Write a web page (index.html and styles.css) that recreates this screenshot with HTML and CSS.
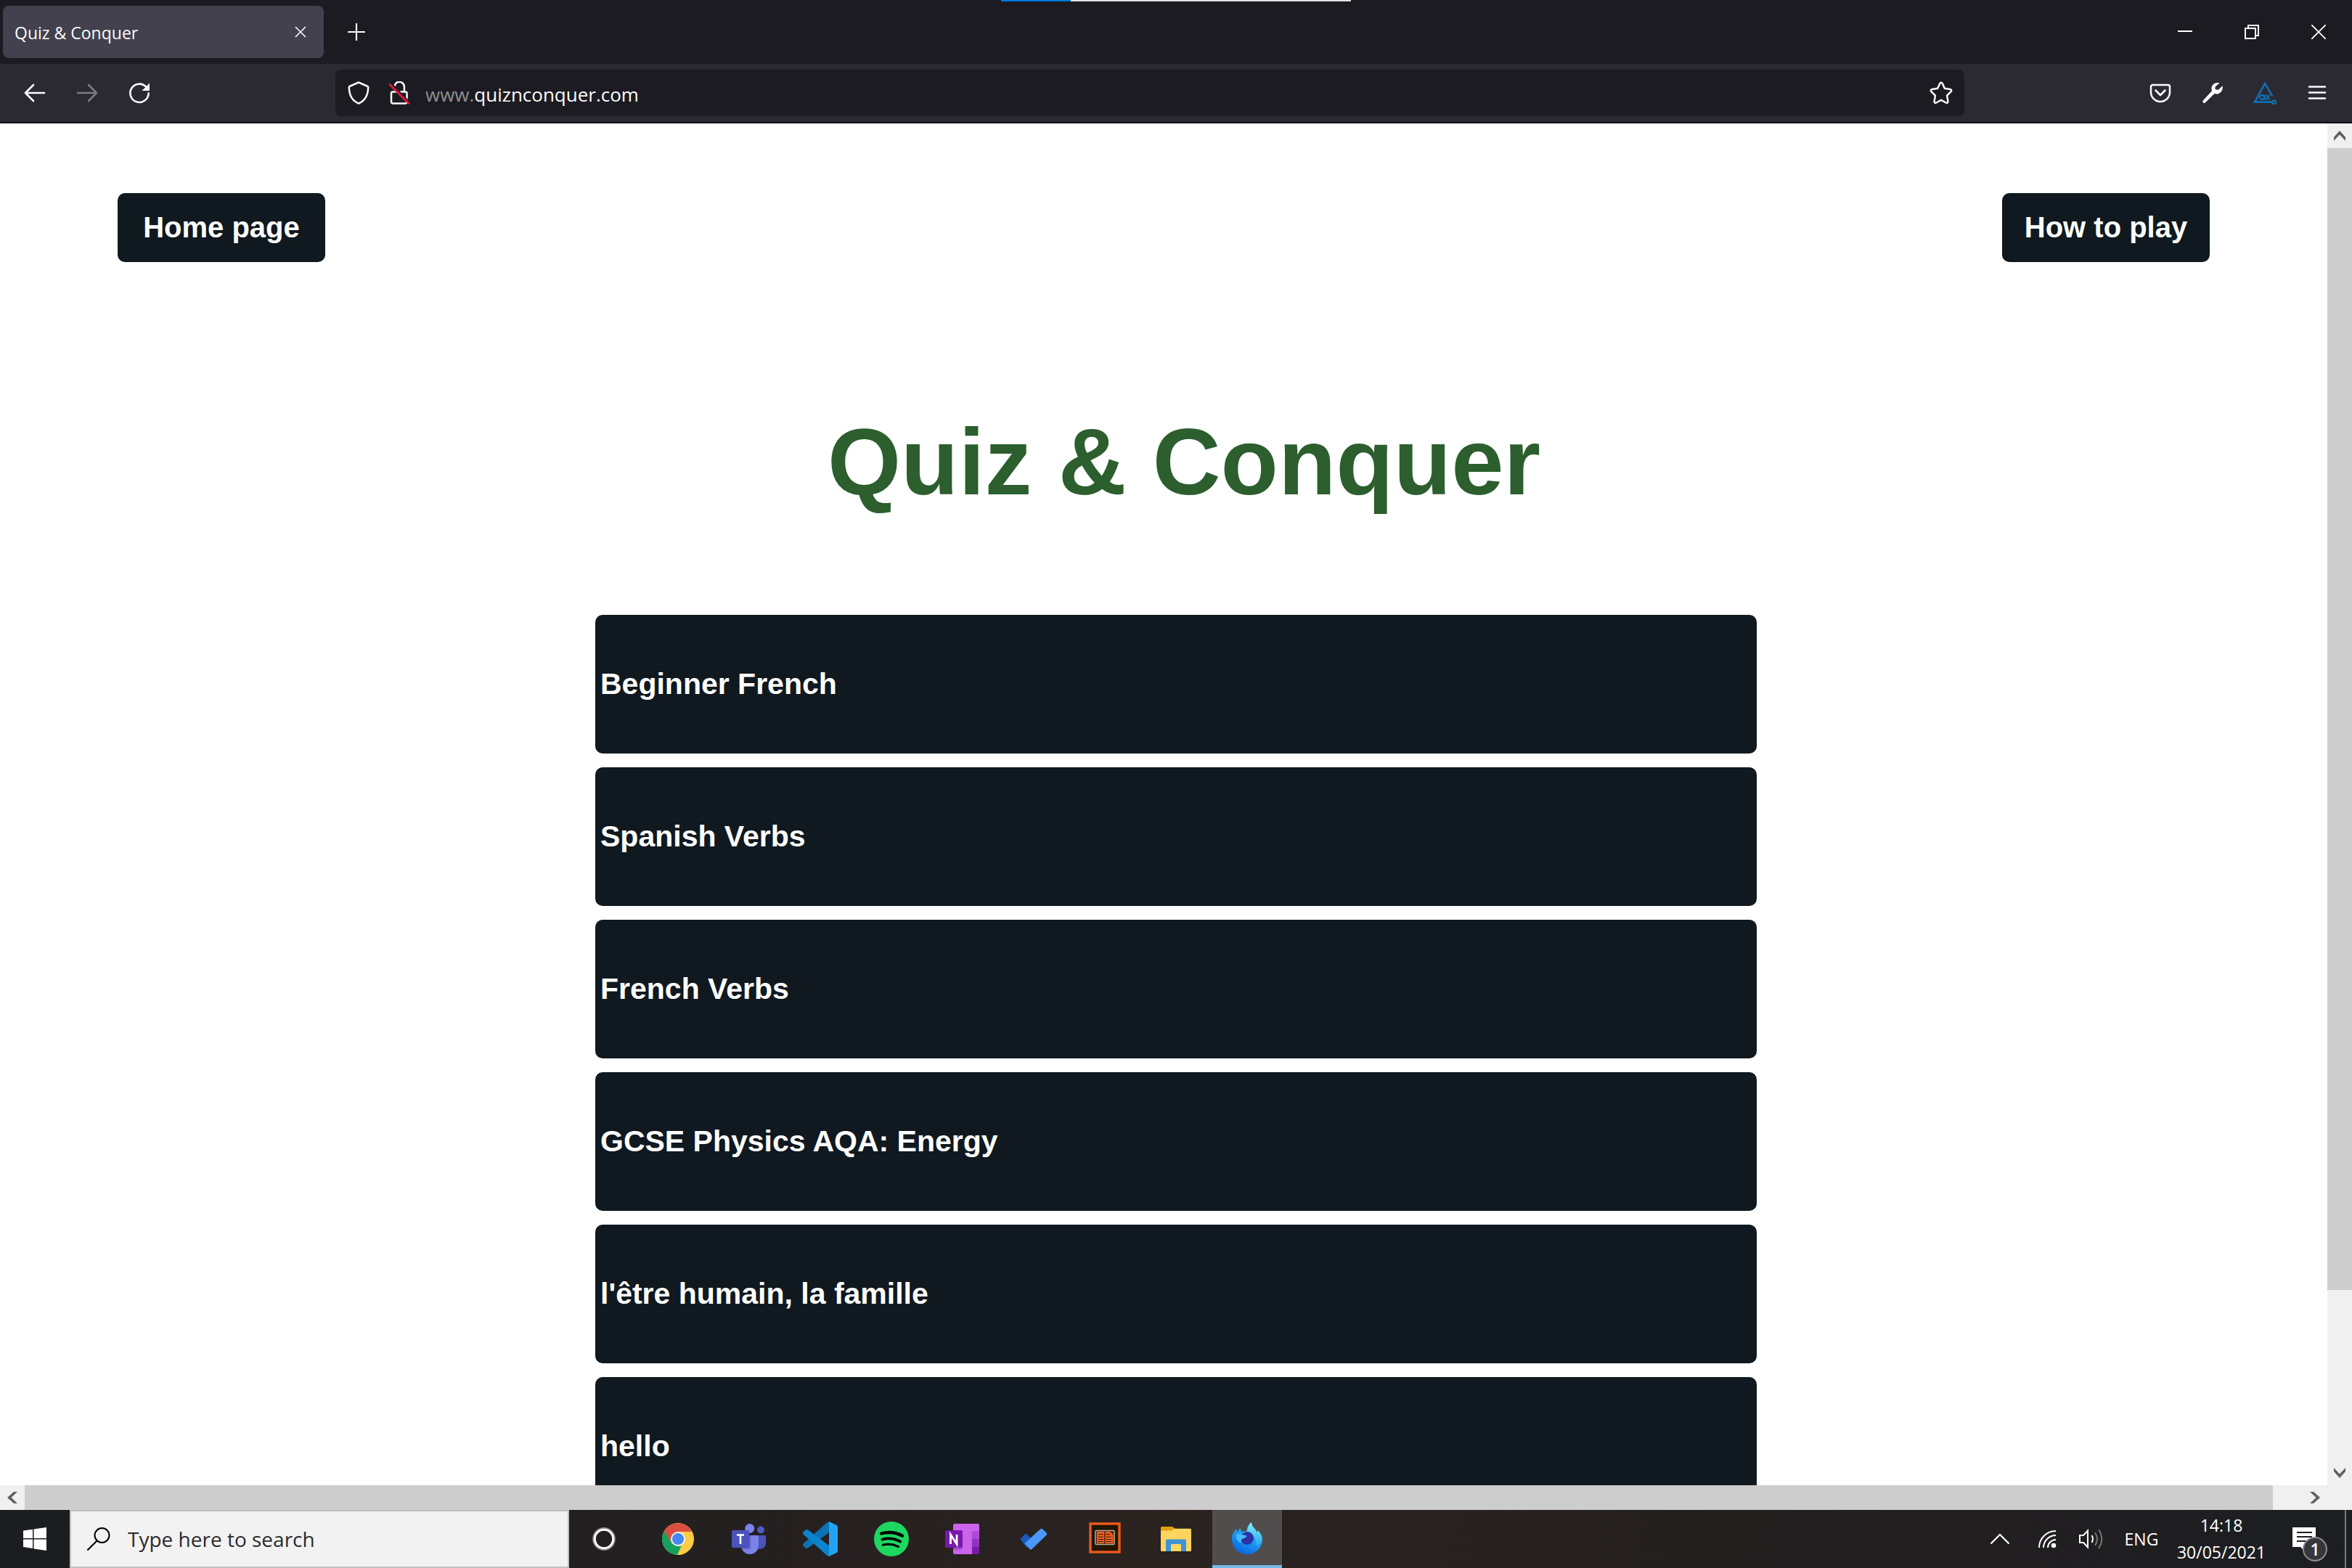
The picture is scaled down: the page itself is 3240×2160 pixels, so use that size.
FILE: index.html
```html
<!DOCTYPE html>
<html lang="en">
<head>
<meta charset="utf-8">
<title>Quiz &amp; Conquer</title>
<link rel="stylesheet" href="styles.css">
</head>
<body>
<header class="browser">
  <div class="progress" aria-hidden="true"><span class="progress-done"></span></div>
  <div class="tabbar">
    <div class="tab">
      <span class="tab-title">Quiz &amp; Conquer</span>
      <button class="tab-close" aria-label="Close tab"><svg width="16" height="16" viewBox="0 0 16 16"><path d="M1 1l14 14M15 1L1 15" fill="none" stroke="#fbfbfe" stroke-width="1.6"/></svg></button>
    </div>
    <button class="new-tab" aria-label="New tab"><svg width="24" height="24" viewBox="0 0 24 24"><path d="M12 1v22M1 12h22" fill="none" stroke="#fff" stroke-width="2.2" stroke-linecap="round"/></svg></button>
    <div class="window-controls">
      <button aria-label="Minimise"><svg width="20" height="20" viewBox="0 0 20 20"><path d="M0 9h20" stroke="#fff" stroke-width="2"/></svg></button>
      <button aria-label="Restore"><svg width="20" height="20" viewBox="0 0 20 20"><path d="M1 5h14v14H1zM5 5V1h14v14h-4" fill="none" stroke="#fff" stroke-width="2"/></svg></button>
      <button aria-label="Close"><svg width="20" height="20" viewBox="0 0 20 20"><path d="M0 0l20 20M20 0L0 20" stroke="#fff" stroke-width="1.8"/></svg></button>
    </div>
  </div>
  <div class="toolbar">
    <button class="tool" aria-label="Back"><svg width="32" height="32" viewBox="0 0 32 32"><path d="M29 16H4M14 5L3 16l11 11" fill="none" stroke="#fbfbfe" stroke-width="2.6" stroke-linecap="round" stroke-linejoin="round"/></svg></button>
    <button class="tool" aria-label="Forward" disabled><svg width="32" height="32" viewBox="0 0 32 32"><path d="M3 16h25M18 5l11 11-11 11" fill="none" stroke="#7b7a82" stroke-width="2.6" stroke-linecap="round" stroke-linejoin="round"/></svg></button>
    <button class="tool" aria-label="Reload"><svg width="32" height="32" viewBox="0 0 32 32"><path d="M25.500 8A12.600 12.600 0 1 0 28.600 16.500" fill="none" stroke="#fbfbfe" stroke-width="2.600" stroke-linecap="round"/><path d="M30 2.500V12a1 1 0 0 1-1 1h-9.500z" fill="#fbfbfe"/></svg></button>
    <div class="urlbar">
      <button class="url-icon" aria-label="Tracking protection"><svg width="32" height="32" viewBox="0 0 32 32"><path d="M16 1.500L28.500 7c.5.2.7.6.7 1.200C29 19 25.500 26.500 16 30.500 6.500 26.500 3 19 2.800 8.200c0-.6.200-1 .700-1.200z" fill="none" stroke="#fbfbfe" stroke-width="2.500" stroke-linejoin="round"/></svg></button>
      <button class="url-icon" aria-label="Connection not secure"><svg width="32" height="32" viewBox="0 0 32 32"><path d="M9.500 7a6.700 6.700 0 0 1 13.400 1v6M7 14.500h17.500a2 2 0 0 1 2 2V28a2.500 2.500 0 0 1-2.500 2.500H7.500A2.500 2.500 0 0 1 5 28V16.500a2 2 0 0 1 2-2z" fill="none" stroke="#fbfbfe" stroke-width="2.500"/><path d="M5.500 3.500l26 27" stroke="#1c1b22" stroke-width="2.500"/><path d="M3 4.500l26 26" stroke="#e5173f" stroke-width="2.700" stroke-linecap="round"/></svg></button>
      <label class="url"><span class="url-sub">www.</span><input class="url-input" type="text" value="quiznconquer.com" aria-label="Address"></label>
      <button class="url-icon" aria-label="Bookmark"><svg width="32" height="32" viewBox="0 0 32 32"><path d="M14.400 2.800c.700-1.500 2.500-1.500 3.200 0l3.300 7 7.600 1.100c1.700.200 2.300 2 1.100 3.200l-5.500 5.500 1.300 7.800c.3 1.700-1.300 2.900-2.700 2.100L16 25.800l-6.700 3.700c-1.400.800-3-.4-2.700-2.100l1.300-7.800-5.500-5.500c-1.200-1.200-.6-3 1.100-3.200l7.600-1.100z" fill="none" stroke="#fbfbfe" stroke-width="2.500" stroke-linejoin="round"/></svg></button>
    </div>
    <button class="tool" aria-label="Pocket"><svg width="32" height="32" viewBox="0 0 32 32"><path d="M5.500 5h21A2.500 2.500 0 0 1 29 7.500V15a13 13 0 0 1-26 0V7.500A2.500 2.500 0 0 1 5.500 5z" fill="none" stroke="#fbfbfe" stroke-width="2.500"/><path d="M9.500 12.500l6.500 6.500 6.500-6.500" fill="none" stroke="#fbfbfe" stroke-width="2.600" stroke-linecap="round" stroke-linejoin="round"/></svg></button>
    <button class="tool" aria-label="Developer tools"><svg width="32" height="32" viewBox="0 0 32 32"><path d="M25.500 2.500C21 1 15 3.500 14.500 9c-.1 1.700.1 2.900.5 4.200L2.800 26.500c-1.600 1.900.9 4.600 2.900 2.900L18.500 17c1.200.4 2.400.6 4 .4 5.500-.6 8.300-6.400 7-11.200l-5.700 5.600-4.200-.9 0-3.300z" fill="#fbfbfe"/></svg></button>
    <button class="tool" aria-label="Accessibility checker"><svg width="32" height="32" viewBox="0 0 32 32"><path d="M26.500 20.500L16 3 2 28.500h24" fill="none" stroke="#0f76bd" stroke-width="2.400"/><circle cx="28.700" cy="28.700" r="2.500" fill="none" stroke="#0f76bd" stroke-width="2"/><circle cx="12" cy="22" r="3" fill="none" stroke="#0f76bd" stroke-width="1.800"/><path d="M15.500 18.500v7M17.500 18.500l5 7M22.500 18.500l-5 7" stroke="#0f76bd" stroke-width="1.800"/></svg></button>
    <button class="tool" aria-label="Menu"><svg width="32" height="32" viewBox="0 0 32 32"><path d="M5 7.500h22M5 15.500h22M5 23.500h22" stroke="#fbfbfe" stroke-width="2.600" stroke-linecap="round"/></svg></button>
  </div>
</header>

<div class="viewport">
  <main class="page">
    <nav class="page-nav">
      <a class="nav-link" href="#home">Home page</a>
      <a class="nav-link" href="#how">How to play</a>
    </nav>
    <h1 class="title">Quiz &amp; Conquer</h1>
    <ul class="quizzes">
      <li><a class="quiz" href="#q1">Beginner French</a></li>
      <li><a class="quiz" href="#q2">Spanish Verbs</a></li>
      <li><a class="quiz" href="#q3">French Verbs</a></li>
      <li><a class="quiz" href="#q4">GCSE Physics AQA: Energy</a></li>
      <li><a class="quiz" href="#q5">l'être humain, la famille</a></li>
      <li><a class="quiz" href="#q6">hello</a></li>
    </ul>
  </main>
  <div class="scroll scroll-v">
    <button class="scroll-btn" aria-label="Scroll up"><svg width="16" height="14" viewBox="0 0 16 14"><path d="M0 9l8-9 8 9v5L8 5.500 0 14z" fill="#606060"/></svg></button>
    <span class="thumb-v"></span><span class="rest-v"></span>
    <button class="scroll-btn" aria-label="Scroll down"><svg width="16" height="14" viewBox="0 0 16 14"><path d="M0 0l8 8.500L16 0v5l-8 9-8-9z" fill="#606060"/></svg></button>
  </div>
  <div class="scroll scroll-h">
    <button class="scroll-btn" aria-label="Scroll left"><svg width="14" height="16" viewBox="0 0 14 16"><path d="M9 0L0 8l9 8h5L5.500 8 14 0z" fill="#606060"/></svg></button>
    <span class="thumb-h"></span><span class="rest-h"></span>
    <button class="scroll-btn" aria-label="Scroll right"><svg width="14" height="16" viewBox="0 0 14 16"><path d="M0 0l8.500 8L0 16h5l9-8-9-8z" fill="#606060"/></svg></button>
  </div>
  <div class="scroll"></div>
</div>

<footer class="taskbar">
  <button class="start" aria-label="Start"><svg width="32" height="32" viewBox="0 0 32 32"><path d="M0 4.500L13 2.700V15H0zM14.500 2.500L32 0v15H14.500zM0 16.500h13v12.400L0 27zM14.500 16.500H32V32l-17.500-2.500z" fill="#fff"/></svg></button>
  <label class="search">
    <svg width="32" height="32" viewBox="0 0 32 32"><circle cx="20.500" cy="11" r="10" fill="none" stroke="#000" stroke-width="2"/><path d="M13.500 18.500L1 31" stroke="#000" stroke-width="2.200" stroke-linecap="round"/></svg>
    <input class="search-input" type="text" placeholder="Type here to search" aria-label="Type here to search">
  </label>
  <button class="app cortana" aria-label="Cortana"><svg width="32" height="32" viewBox="0 0 32 32"><circle cx="16" cy="16" r="14.700" fill="none" stroke="#8a8888" stroke-width="2.500"/><circle cx="16" cy="16" r="12.700" fill="none" stroke="#fff" stroke-width="3"/></svg></button>
  <div class="apps">
    <button class="app" aria-label="Chrome"><svg width="48" height="48" viewBox="0 0 48 48"><circle cx="24" cy="24" r="22" fill="#fc4"/><path d="M4.900 13A22 22 0 0 1 43.100 14H24L14.800 29z" fill="#db4f43"/><path d="M4.900 13L15.300 29.500 24 34h4.500L23 46A22 22 0 0 1 4.900 13z" fill="#17a05d"/><path d="M23 46l9.500-17L30 14h13.100A22 22 0 0 1 23 46z" fill="#fc4"/><circle cx="24" cy="24" r="10" fill="#f4f4f4"/><circle cx="24" cy="24" r="8" fill="#4587f3"/></svg></button>
    <button class="app" aria-label="Teams"><svg width="48" height="48" viewBox="0 0 48 48"><circle cx="40" cy="11.500" r="5" fill="#5059c9"/><path d="M34 19h11.500a1.500 1.500 0 0 1 1.500 1.500V30a8 8 0 0 1-13 6z" fill="#4b53bc"/><circle cx="24.800" cy="9.500" r="6.500" fill="#7b83eb"/><path d="M14 19h21.500a1.500 1.500 0 0 1 1.500 1.500V33a12 12 0 0 1-24 0z" fill="#7b83eb"/><path d="M14 19h12v17a2 2 0 0 1-2 2H14z" fill="#4c51a8" opacity=".6"/><rect x="0" y="12" width="24" height="24" rx="2" fill="#4b53bc"/><path d="M7 18.500h10M12 18.500V31" stroke="#fff" stroke-width="2.600"/></svg></button>
    <button class="app" aria-label="Visual Studio Code"><svg width="48" height="48" viewBox="0 0 48 48"><path d="M36 0v15L7 36.500c-1 .7-2 .7-3 0L.8 33.800c-1.100-1-1.100-2.500 0-3.500L33.500 1z" fill="#0b72b5"/><path d="M36 48V33L7 11.500c-1-.7-2-.7-3 0L.8 14.200c-1.100 1-1.100 2.500 0 3.500L33.500 47z" fill="#0b84d0"/><path d="M36 0l10.500 5c1 .5 1.500 1.200 1.500 2.300v33.400c0 1.100-.5 1.800-1.500 2.300L36 48z" fill="#22a2f2"/></svg></button>
    <button class="app" aria-label="Spotify"><svg width="48" height="48" viewBox="0 0 48 48"><circle cx="24" cy="24" r="24" fill="#1ed760"/><path d="M10 16.500c10-2.800 20-1.800 29 3.200" fill="none" stroke="#000" stroke-width="4.400" stroke-linecap="round"/><path d="M11.300 24.700c8.500-2.300 17-1.300 25 2.900" fill="none" stroke="#000" stroke-width="3.700" stroke-linecap="round"/><path d="M12.300 32.300c7.500-1.800 14.500-1 21.300 2.300" fill="none" stroke="#000" stroke-width="3" stroke-linecap="round"/></svg></button>
    <button class="app" aria-label="OneNote"><svg width="48" height="48" viewBox="0 0 48 48"><path d="M13 3h32a2 2 0 0 1 2 2v8H37v32H13a2 2 0 0 1-2-2V5a2 2 0 0 1 2-2z" fill="#ca64ea"/><path d="M37 13h10v11H37z" fill="#ae4bd5"/><path d="M37 24h10v11H37z" fill="#9332bf"/><path d="M37 35h10v8a2 2 0 0 1-2 2h-8z" fill="#7719aa"/><path d="M11 14h13v22a3 3 0 0 1-3 3H11z" fill="#8c3aad" opacity=".5"/><rect x="0" y="12" width="24" height="24" rx="2" fill="#7719aa"/><path d="M7.500 31V18L16 31V18" fill="none" stroke="#fff" stroke-width="2.800"/></svg></button>
    <button class="app" aria-label="To Do"><svg width="48" height="48" viewBox="0 0 48 48"><path d="M6.500 23l5-5.500c1-1 2-1 3 0l9 8.500-9 10L6.500 26c-1-1-1-2 0-3z" fill="#195abd"/><path d="M11.500 30L33 10.500c1-1 2.200-1 3.200 0l5.300 5c1 1 1 2.200 0 3.200L21.500 38c-1 1-2 1-3 0z" fill="#4a98fa"/></svg></button>
    <button class="app" aria-label="Digital Editions"><svg width="48" height="48" viewBox="0 0 48 48"><rect x="4" y="3" width="40" height="39" fill="#231600" stroke="#ee5a1c" stroke-width="3.400"/><rect x="11" y="12.500" width="26" height="19" rx="1" fill="#33230f" stroke="#b9ae9f" stroke-width="1.500"/><path d="M13 14h10.300v16H13zM24.700 14h6.800l4 4v12H24.700z" fill="#ee5a1c"/><path d="M15 17.500h7M15 21h7M15 24.500h7M15 27.500h7M26 17.500h5M26 21h7M26 24.500h7M26 27.500h7" stroke="#33230f" stroke-width="1.200"/></svg></button>
    <button class="app" aria-label="File Explorer"><svg width="48" height="48" viewBox="0 0 48 48"><path d="M3 8.500A1.500 1.500 0 0 1 4.500 7H19l4 3v4H3z" fill="#e0a10b"/><path d="M3 12.500h15l4-2.700h21.500A1.500 1.500 0 0 1 45 11.300v28.200a1.500 1.500 0 0 1-1.500 1.500h-39A1.500 1.500 0 0 1 3 39.500z" fill="#ffd55e"/><path d="M10 41V26.500a2 2 0 0 1 2-2h24a2 2 0 0 1 2 2V41h-7v-8.500a1.500 1.500 0 0 0-1.500-1.500h-11a1.500 1.500 0 0 0-1.500 1.500V41z" fill="#3d94d8"/></svg></button>
    <button class="app app-active" aria-label="Firefox"><svg width="48" height="48" viewBox="0 0 48 48"><defs><linearGradient id="flame" x1=".8" y1="0" x2=".3" y2="1"><stop offset="0" stop-color="#6ff0ff"/><stop offset=".45" stop-color="#1ea4f8"/><stop offset="1" stop-color="#0a62dd"/></linearGradient><linearGradient id="tail" x1="0" y1="0" x2="0" y2="1"><stop offset="0" stop-color="#80ebff"/><stop offset="1" stop-color="#2aa5ee"/></linearGradient></defs><path d="M8 10c1 2 2 3 3.500 4.500C12 12 13 10.500 15 9c0 2 .5 3.500 1.500 5 2-.5 4-.6 6.500-.5 1-5.500 3-9.500 7-12.500.5 4 2 6.500 5 9.500l2 4 2-2c3.500 3.500 6 7 6 12A21 21 0 1 1 3 24c0-4 .5-6 2-9 .7.500 1 .7 1.500 1-.2-2.200.3-4 1.500-6z" fill="url(#flame)"/><path d="M24 13c1-5.500 2.500-9.500 5.500-12 .5 4 2.500 6.500 5.500 9.500l2 4 2-2c3 3.500 5 7.500 4.500 13.500-1.500 4.500-4 6.500-7.500 8C38 26 34 17 24 13z" fill="url(#tail)"/><circle cx="24" cy="23" r="9" fill="#2e32a6"/><path d="M9 18c3-1.500 6-1.500 9 .2 2.500.3 4 .6 5.500 1.800-1 2.500-3.500 3-6.500 4-2 2-.5 4-1 5.500C10 28 8.500 22.500 9 18z" fill="#45b8f5"/></svg></button>
  </div>
  <div class="tray">
    <button class="tray-btn tray-more" aria-label="Show hidden icons"><svg width="28" height="16" viewBox="0 0 28 16"><path d="M1.500 14.500L14 2l12.500 12.500" fill="none" stroke="#fff" stroke-width="2.200"/></svg></button>
    <button class="tray-btn" aria-label="Network"><svg width="26" height="26" viewBox="0 0 26 26"><path d="M2 25A23 23 0 0 1 25 2M8 25A17 17 0 0 1 25 8M14 25A11 11 0 0 1 25 14" fill="none" stroke="#fff" stroke-width="2"/><circle cx="22" cy="22" r="3.300" fill="#fff"/></svg></button>
    <button class="tray-btn" aria-label="Volume"><svg width="34" height="30" viewBox="0 0 34 30"><path d="M2 10h5l6-6.500v23L7 20H2z" fill="none" stroke="#fff" stroke-width="2"/><path d="M18.500 10q3 5 0 10" fill="none" stroke="#fff" stroke-width="2"/><path d="M23 6q6 9 0 18M28 2q8.500 13 0 26" fill="none" stroke="#777" stroke-width="2"/></svg></button>
    <button class="tray-btn tray-lang">ENG</button>
    <button class="tray-btn clock"><span>14:18</span><span>30/05/2021</span></button>
    <button class="tray-btn tray-note" aria-label="Notifications"><svg width="48" height="48" viewBox="0 0 48 48"><path d="M7 8h32v27H23v5l-5-5H7z" fill="#fff"/><path d="M13 15h21M13 21h21M13 27h21" stroke="#1e1f22" stroke-width="2"/></svg><span class="badge">1</span></button>
    <button class="show-desktop" aria-label="Show desktop"></button>
  </div>
</footer>
</body>
</html>
```
FILE: styles.css
```css
* { box-sizing: border-box; }

body {
  margin: 0;
  height: 100vh;
  display: flex;
  flex-direction: column;
  overflow: hidden;
  background: #fff;
  font-family: "Open Sans", "Noto Sans", sans-serif;
}

button {
  margin: 0;
  padding: 0;
  border: 0;
  background: none;
  color: inherit;
  font: inherit;
  display: flex;
  align-items: center;
  justify-content: center;
}

input {
  padding: 0;
  border: 0;
  outline: 0;
  background: none;
  font: inherit;
  color: inherit;
}

svg { display: block; flex: none; }

/* Browser chrome */
.browser { position: relative; flex: none; color: #fbfbfe; border-bottom: 2px solid #0c0c0d; }

.progress {
  position: absolute;
  top: 0;
  left: 50%;
  width: 482px;
  height: 2px;
  margin-left: -241px;
  background: #e3e3e3;
}
.progress-done { display: block; width: 20%; height: 2px; background: #0078d7; }

.tabbar { height: 88px; display: flex; align-items: center; padding-left: 4px; background: #1c1b22; }
.tab {
  width: 442px;
  height: 72px;
  display: flex;
  align-items: center;
  justify-content: space-between;
  padding: 0 24px 0 16px;
  border-radius: 8px;
  background: #42414d;
  font-size: 23px;
}
.tab-title { padding-top: 2px; }
.tab-close { width: 16px; height: 32px; }
.new-tab { width: 90px; height: 72px; }
.window-controls { display: flex; margin-left: auto; }
.window-controls button { width: 92px; height: 88px; }

.toolbar { height: 80px; display: flex; align-items: center; padding: 0 12px; background: #2b2a33; }
.tool { width: 72px; height: 64px; flex: none; }
.urlbar {
  flex: 1;
  height: 64px;
  display: flex;
  align-items: center;
  margin: 0 234px;
  padding: 0 4px;
  border-radius: 8px;
  background: #1c1b22;
}
.url-icon { width: 56px; height: 64px; flex: none; }
.url { flex: 1; display: flex; align-items: center; padding: 3px 0 0 8px; font-size: 26px; line-height: 36px; }
.url-sub { color: #8f8f94; }
.url-input { flex: 1; height: 36px; }

/* Page and its scroll bars */
.viewport {
  flex: 1;
  min-height: 0;
  display: grid;
  grid-template-columns: minmax(0, 1fr) 34px;
  grid-template-rows: minmax(0, 1fr) 34px;
}
.page { overflow: hidden; font-family: "Liberation Sans", Arial, sans-serif; font-weight: bold; }
.page-nav { display: flex; justify-content: space-between; padding: 96px 5vw 0; }
.nav-link {
  width: 286px;
  height: 95px;
  display: flex;
  align-items: center;
  justify-content: center;
  border-radius: 10px;
  background: #10191f;
  color: #fff;
  font-size: 40px;
  text-decoration: none;
}
.title {
  width: 100vw;
  margin: 200px 0 136px;
  padding-left: 22px;
  color: #2c5e2e;
  font-size: 130px;
  line-height: 150px;
  text-align: center;
}
.quizzes {
  width: 100vw;
  margin: 0;
  padding: 0;
  display: flex;
  flex-direction: column;
  align-items: center;
  gap: 19px;
  list-style: none;
}
.quizzes li { width: 100%; max-width: 1600px; }
.quiz {
  height: 191px;
  display: flex;
  align-items: center;
  padding: 0 7px;
  border-radius: 10px;
  background: #10191f;
  color: #fff;
  font-size: 41px;
  text-decoration: none;
}

.scroll { display: flex; background: #f0f0f0; }
.scroll-v { flex-direction: column; }
.scroll-btn { width: 34px; height: 34px; flex: none; }
.thumb-v, .thumb-h { background: #cdcdcd; }
.thumb-v { flex: 87; }
.rest-v { flex: 13; }
.thumb-h { flex: 987; }
.rest-h { flex: 13; }

/* Taskbar */
.taskbar {
  flex: none;
  height: 80px;
  display: flex;
  background: linear-gradient(90deg, #1b1d21, #231f20 25%, #2a2320 50%, #231f20 80%, #1c1e21);
  color: #fff;
}
.start { width: 96px; }
.search {
  width: 688px;
  display: flex;
  align-items: center;
  gap: 24px;
  padding: 0 22px;
  border: 2px solid #c0c0c0;
  background: #f2f2f2;
  color: #2b2b2b;
  font-size: 28px;
}
.search-input { flex: 1; height: 40px; }
.search-input::placeholder { color: #2b2b2b; opacity: 1; }
.app { width: 96px; height: 80px; }
.cortana { margin-right: 6px; }
.apps { display: flex; gap: 2px; }
.app-active { background: linear-gradient(#76b9ed, #76b9ed) bottom / 100% 4px no-repeat #514d4c; }

.tray { display: flex; margin-left: auto; font-size: 23px; }
.tray-btn { width: 60px; height: 80px; }
.tray-more { width: 70px; }
.tray-lang { width: 80px; }
.clock { width: 140px; flex-direction: column; line-height: 37px; }
.tray-note { width: 90px; position: relative; }
.badge {
  position: absolute;
  right: 14px;
  bottom: 9px;
  width: 34px;
  height: 34px;
  border: 2px solid #8d8d8f;
  border-radius: 50%;
  background: #36373a;
  font-weight: 600;
  line-height: 30px;
  text-align: center;
}
.show-desktop { width: 10px; margin-left: 10px; border-left: 2px solid #77787a; }
```
